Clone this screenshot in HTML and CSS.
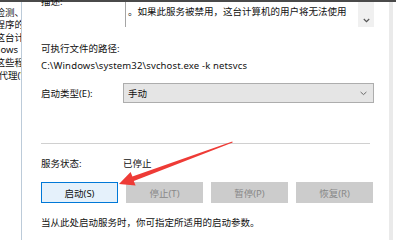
FILE: index.html
```html
<!DOCTYPE html>
<html lang="zh-CN">
<head>
<meta charset="utf-8">
<title>服务属性</title>
<link rel="stylesheet" href="styles.css">
</head>
<body>
<div class="topbar"></div>
<div class="main">
  <div class="left">
    <div class="left-inner">
      <div class="lline"><span>检测、</span></div>
      <div class="lline"><span>程序的</span></div>
      <div class="lline"><span>这台计</span></div>
      <div class="lline lline-ows"><span>Windows</span></div>
      <div class="lline"><span>这些程</span></div>
      <div class="lline"><span>代理(\</span></div>
    </div>
  </div>
  <div class="dialog">
    <div class="desc-row">
      <div class="label label-desc">描述:</div>
      <div class="textbox">
        <div class="textbox-text">。如果此服务被禁用，这台计算机的用户将无法使用</div>
        <div class="vscroll">
          <svg class="chev chev-scroll" width="7" height="5" viewBox="0 0 7 5"><path d="M0.8 1 L3.5 3.7 L6.2 1" fill="none" stroke="#555" stroke-width="1.2"/></svg>
        </div>
      </div>
    </div>
    <div class="text-line path-label">可执行文件的路径:</div>
    <div class="text-line path">C:\Windows\system32\svchost.exe -k netsvcs</div>
    <div class="row combo-row">
      <div class="label">启动类型(E):</div>
      <div class="combo">
        <span class="combo-text">手动</span>
        <svg class="chev" width="7" height="5" viewBox="0 0 7 5"><path d="M0.6 1 L3.5 3.6 L6.4 1" fill="none" stroke="#6a6a6a" stroke-width="1"/></svg>
      </div>
    </div>
    <div class="sep"></div>
    <div class="row status-row">
      <div class="label">服务状态:</div>
      <div class="status-value">已停止</div>
    </div>
    <div class="buttons">
      <div class="btn btn-default">启动(S)</div>
      <div class="btn btn-disabled">停止(T)</div>
      <div class="btn btn-disabled">暂停(P)</div>
      <div class="btn btn-disabled">恢复(R)</div>
    </div>
    <div class="text-line hint">当从此处启动服务时，你可指定所适用的启动参数。</div>
  </div>
  <div class="strip"></div>
</div>
<svg class="arrow" width="396" height="240" viewBox="0 0 396 240">
  <polygon points="232.3,141.6 132.4,176.6 130.6,172.0 119,184 135.6,185.6 133.8,181.0 232.7,142.6" fill="#ee3b36"/>
</svg>
</body>
</html>
```
FILE: styles.css
```css
html, body {
  margin: 0;
  padding: 0;
}
body {
  width: 396px;
  height: 240px;
  overflow: hidden;
  background: #ffffff;
  position: relative;
  font-family: "Noto Sans", "Noto Sans CJK SC", sans-serif;
  font-size: 9.5px;
  color: #111;
}
.topbar {
  height: 2px;
  background: #4a4a4a;
}
.main {
  display: flex;
  height: 238px;
}
.left {
  width: 21px;
  border-right: 1px solid #bccbd9;
  overflow: hidden;
  flex: none;
}
.left-inner {
  width: 24px;
  padding-top: 4.7px;
  line-height: 12.6px;
}
.lline {
  display: flex;
  justify-content: flex-end;
  white-space: nowrap;
}
.lline-ows {
  padding-right: 6px;
}
.dialog {
  width: 333px;
  padding: 0 15px 0 19px;
  flex: none;
}
.strip {
  width: 4px;
  background: #eaeaea;
  flex: none;
}
.desc-row {
  display: flex;
  height: 25px;
}
.label {
  width: 82px;
  flex: none;
  line-height: 17px;
  white-space: nowrap;
}
.label-desc {
  margin-top: -9px;
}
.textbox {
  margin-left: 2px;
  flex: 1;
  display: flex;
  border-left: 1px solid #a5a5a5;
}
.textbox-text {
  flex: 1;
  padding: 4px 0 0 2px;
  line-height: 12px;
  white-space: nowrap;
  overflow: hidden;
}
.vscroll {
  width: 16px;
  background: #f0f0f0;
  display: flex;
  justify-content: center;
  align-items: flex-end;
  padding-bottom: 4px;
  box-sizing: border-box;
}
.text-line {
  line-height: 17px;
  white-space: nowrap;
}
.path {
  letter-spacing: 0.15px;
}
.path-label {
  margin-top: 13px;
}
.row {
  display: flex;
  align-items: center;
}
.combo-row {
  margin-top: 9px;
  height: 20px;
}
.combo {
  flex: 1;
  height: 20px;
  box-sizing: border-box;
  border: 1px solid #adadad;
  background: #e5e5e5;
  display: flex;
  align-items: center;
  justify-content: space-between;
  padding: 0 6px 0 4px;
}
.combo-text {
  line-height: 17px;
}
.sep {
  margin-top: 40px;
  width: 329px;
  height: 1px;
  background: #d0d0d0;
}
.status-row {
  margin-top: 11px;
  height: 17px;
}
.status-value {
  line-height: 17px;
}
.buttons {
  margin-top: 10px;
  display: flex;
  gap: 8px;
}
.btn {
  width: 77px;
  height: 21px;
  box-sizing: border-box;
  display: flex;
  align-items: center;
  justify-content: center;
  white-space: nowrap;
}
.btn-default {
  background: #e5f1fb;
  border: 1px solid #0078d7;
  color: #111;
}
.btn-disabled {
  background: #cccccc;
  border: 1px solid #cccccc;
  color: #888888;
}
.hint {
  margin-top: 11px;
}
.arrow {
  position: absolute;
  left: 0;
  top: 0;
  pointer-events: none;
}
```
